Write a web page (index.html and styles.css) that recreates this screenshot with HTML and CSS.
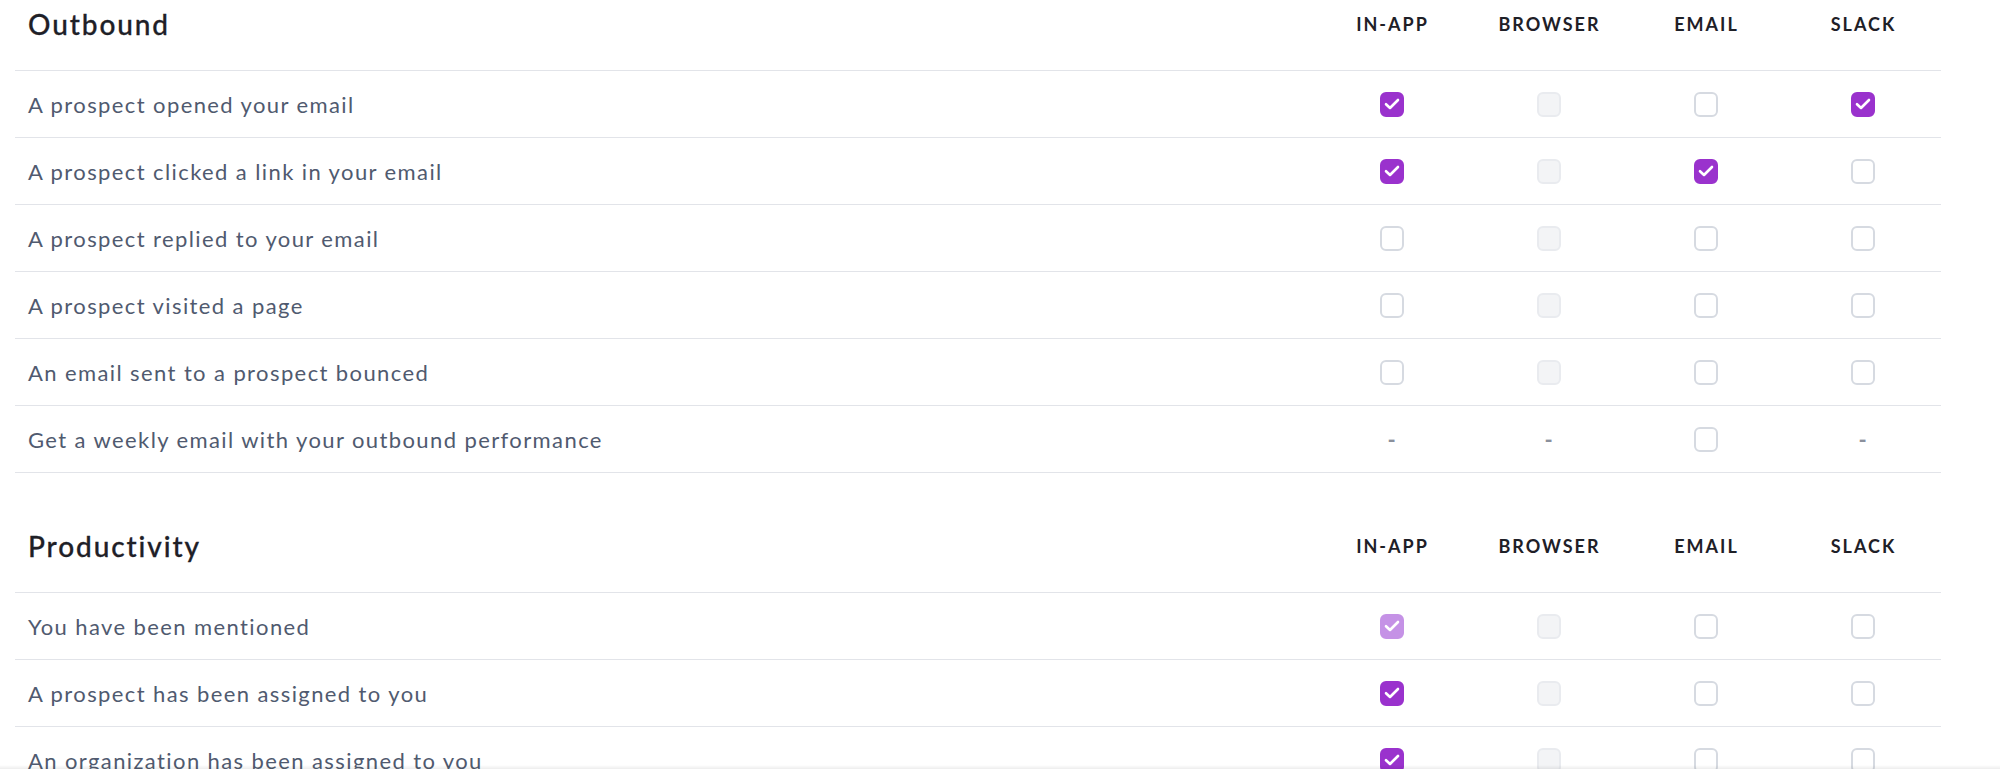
FILE: index.html
```html
<!DOCTYPE html>
<html lang="en">
<head>
    <meta charset="UTF-8">
    <meta name="viewport" content="width=device-width, initial-scale=1.0">
    <title>Notifications</title>
    <link rel="stylesheet" href="styles.css">
</head>
<body>
    <div class="settings">
        <div class="group">
            <div class="row head">
                <div class="title">Outbound</div>
                <div class="col">In-app</div>
                <div class="col">Browser</div>
                <div class="col">Email</div>
                <div class="col">Slack</div>
            </div>
            <div class="row">
                <div class="label">A prospect opened your email</div>
                <div class="cell"><span class="box on"><svg viewBox="0 0 24 24"><polyline points="6,12.2 10,16 18,8"/></svg></span></div>
                <div class="cell"><span class="box off"></span></div>
                <div class="cell"><span class="box"></span></div>
                <div class="cell"><span class="box on"><svg viewBox="0 0 24 24"><polyline points="6,12.2 10,16 18,8"/></svg></span></div>
            </div>
            <div class="row">
                <div class="label">A prospect clicked a link in your email</div>
                <div class="cell"><span class="box on"><svg viewBox="0 0 24 24"><polyline points="6,12.2 10,16 18,8"/></svg></span></div>
                <div class="cell"><span class="box off"></span></div>
                <div class="cell"><span class="box on"><svg viewBox="0 0 24 24"><polyline points="6,12.2 10,16 18,8"/></svg></span></div>
                <div class="cell"><span class="box"></span></div>
            </div>
            <div class="row">
                <div class="label">A prospect replied to your email</div>
                <div class="cell"><span class="box"></span></div>
                <div class="cell"><span class="box off"></span></div>
                <div class="cell"><span class="box"></span></div>
                <div class="cell"><span class="box"></span></div>
            </div>
            <div class="row">
                <div class="label">A prospect visited a page</div>
                <div class="cell"><span class="box"></span></div>
                <div class="cell"><span class="box off"></span></div>
                <div class="cell"><span class="box"></span></div>
                <div class="cell"><span class="box"></span></div>
            </div>
            <div class="row">
                <div class="label">An email sent to a prospect bounced</div>
                <div class="cell"><span class="box"></span></div>
                <div class="cell"><span class="box off"></span></div>
                <div class="cell"><span class="box"></span></div>
                <div class="cell"><span class="box"></span></div>
            </div>
            <div class="row">
                <div class="label">Get a weekly email with your outbound performance</div>
                <div class="cell dash">-</div>
                <div class="cell dash">-</div>
                <div class="cell"><span class="box"></span></div>
                <div class="cell dash">-</div>
            </div>
        </div>

        <div class="group">
            <div class="row head">
                <div class="title">Productivity</div>
                <div class="col">In-app</div>
                <div class="col">Browser</div>
                <div class="col">Email</div>
                <div class="col">Slack</div>
            </div>
            <div class="row">
                <div class="label">You have been mentioned</div>
                <div class="cell"><span class="box on locked"><svg viewBox="0 0 24 24"><polyline points="6,12.2 10,16 18,8"/></svg></span></div>
                <div class="cell"><span class="box off"></span></div>
                <div class="cell"><span class="box"></span></div>
                <div class="cell"><span class="box"></span></div>
            </div>
            <div class="row">
                <div class="label">A prospect has been assigned to you</div>
                <div class="cell"><span class="box on"><svg viewBox="0 0 24 24"><polyline points="6,12.2 10,16 18,8"/></svg></span></div>
                <div class="cell"><span class="box off"></span></div>
                <div class="cell"><span class="box"></span></div>
                <div class="cell"><span class="box"></span></div>
            </div>
            <div class="row">
                <div class="label">An organization has been assigned to you</div>
                <div class="cell"><span class="box on"><svg viewBox="0 0 24 24"><polyline points="6,12.2 10,16 18,8"/></svg></span></div>
                <div class="cell"><span class="box off"></span></div>
                <div class="cell"><span class="box"></span></div>
                <div class="cell"><span class="box"></span></div>
            </div>
        </div>
    </div>
    <div class="footer-shade"></div>
</body>
</html>
```

FILE: styles.css
```css
body {
    margin: 0;
    background: #fff;
    font-family: Lato, "Liberation Sans", sans-serif;
}
.settings {
    width: 1926px;
    margin-left: 15px;
}
.group + .group {
    margin-top: 49px;
}
.row {
    display: grid;
    grid-template-columns: 1fr repeat(4, 157px);
    align-items: center;
    height: 67px;
    box-sizing: border-box;
    border-bottom: 1px solid #e2e4e9;
}
.row.head {
    height: 71px;
    padding-bottom: 22px;
}
.title {
    padding-left: 13px;
    font-size: 28px;
    font-weight: 500;
    letter-spacing: 1.9px;
    color: #1e2027;
    -webkit-text-stroke: 0.3px #1e2027;
}
.col {
    text-align: center;
    padding-left: 2px;
    font-size: 18px;
    font-weight: 700;
    letter-spacing: 2px;
    text-transform: uppercase;
    color: #1e2027;
}
.label {
    padding-left: 13px;
    font-size: 22px;
    letter-spacing: 1.4px;
    color: #505a6f;
}
.cell {
    display: flex;
    justify-content: center;
    align-items: center;
}
.cell.dash {
    font-size: 22px;
    font-weight: 700;
    color: #8a909c;
}
.box {
    width: 24px;
    height: 25px;
    box-sizing: border-box;
    border-radius: 6px;
    border: 2px solid #d6dae1;
    background: #fff;
    display: flex;
    align-items: center;
    justify-content: center;
}
.box.off {
    background: #f3f4f6;
    border-color: #e9ebef;
}
.box.on {
    background: #9a32cd;
    border-color: #9a32cd;
}
.box.on.locked {
    background: #c592e6;
    border-color: #c592e6;
}
.box svg {
    width: 24px;
    height: 24px;
    flex: none;
    fill: none;
    stroke: #fff;
    stroke-width: 2.6;
    stroke-linecap: round;
    stroke-linejoin: round;
}
.footer-shade {
    position: fixed;
    left: 0;
    right: 0;
    bottom: 0;
    height: 4px;
    background: linear-gradient(to bottom, rgba(0, 0, 0, 0), rgba(0, 0, 0, 0.07));
}
```
